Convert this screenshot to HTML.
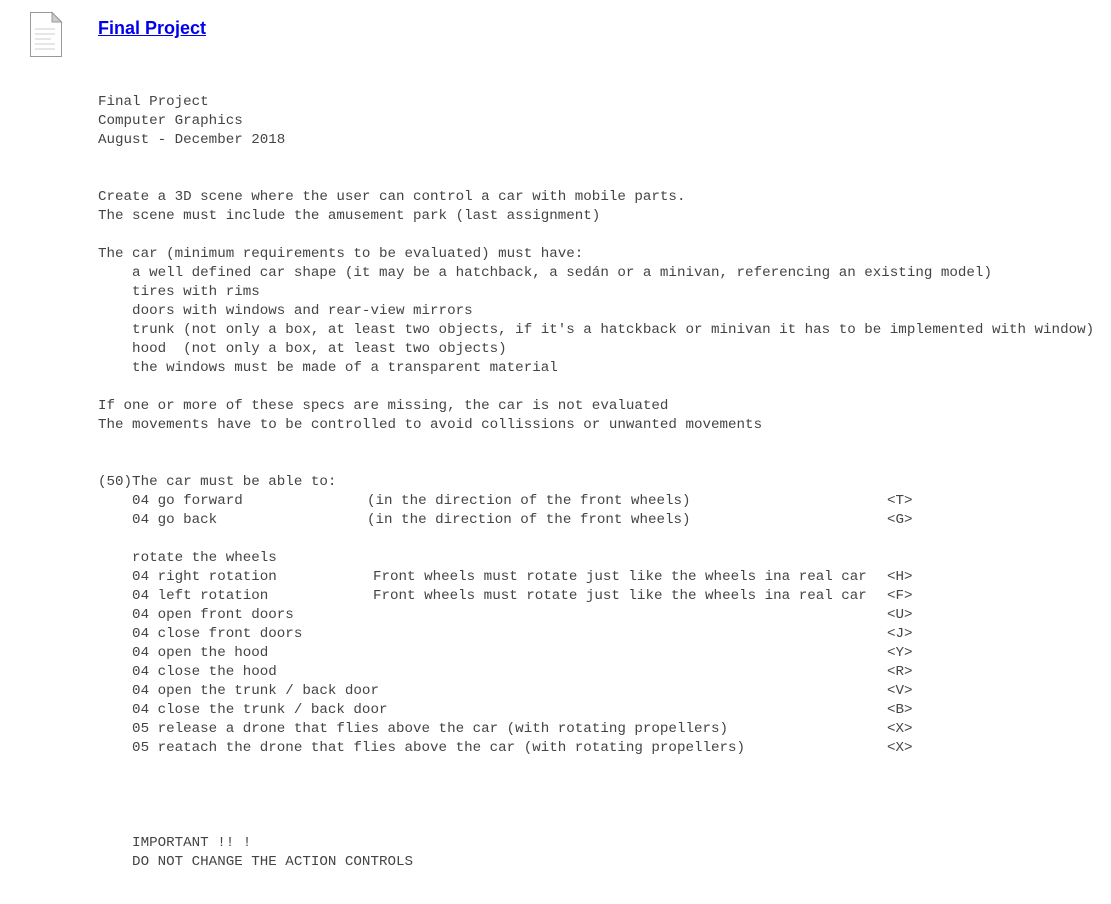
<!DOCTYPE html>
<html><head><meta charset="utf-8"><style>
body{margin:0;background:#fff;width:1111px;height:904px;position:relative;overflow:hidden}
.t{position:absolute;left:98px;top:18px;font:bold 18px "Liberation Sans",sans-serif;color:#0000ee;text-decoration:underline}
.l{position:absolute;font:14.2px "Liberation Mono",monospace;line-height:19px;color:#444;white-space:pre}
</style></head><body>
<svg style="position:absolute;left:29px;top:11px" width="34" height="47" viewBox="0 0 34 47">
<path d="M1.5 1.5H23L32.5 11V45.5H1.5Z" fill="#fff" stroke="#999" stroke-width="1"/>
<path d="M23 1.5V11H32.5Z" fill="#ccc" stroke="#999" stroke-width="1"/>
<g stroke="#ccc" stroke-width="1"><line x1="6" y1="18" x2="26" y2="18"/><line x1="6" y1="23" x2="26" y2="23"/><line x1="6" y1="28" x2="22" y2="28"/><line x1="6" y1="33" x2="26" y2="33"/><line x1="6" y1="38" x2="26" y2="38"/></g>
</svg>
<div class="t">Final Project</div>
<div class="l" style="left:98px;top:93px">Final Project
Computer Graphics
August - December 2018


Create a 3D scene where the user can control a car with mobile parts.
The scene must include the amusement park (last assignment)

The car (minimum requirements to be evaluated) must have:
    a well defined car shape (it may be a hatchback, a sedán or a minivan, referencing an existing model)
    tires with rims
    doors with windows and rear-view mirrors
    trunk (not only a box, at least two objects, if it's a hatckback or minivan it has to be implemented with window)
    hood  (not only a box, at least two objects)
    the windows must be made of a transparent material

If one or more of these specs are missing, the car is not evaluated
The movements have to be controlled to avoid collissions or unwanted movements


(50)The car must be able to:
    04 go forward
    04 go back

    rotate the wheels
    04 right rotation
    04 left rotation
    04 open front doors
    04 close front doors
    04 open the hood
    04 close the hood
    04 open the trunk / back door
    04 close the trunk / back door
    05 release a drone that flies above the car (with rotating propellers)
    05 reatach the drone that flies above the car (with rotating propellers)




    IMPORTANT !! !
    DO NOT CHANGE THE ACTION CONTROLS</div>
<div class="l" style="left:367px;top:492px">(in the direction of the front wheels)
(in the direction of the front wheels)</div>
<div class="l" style="left:373px;top:568px">Front wheels must rotate just like the wheels ina real car
Front wheels must rotate just like the wheels ina real car</div>
<div class="l" style="left:887px;top:492px">&lt;T&gt;
&lt;G&gt;


&lt;H&gt;
&lt;F&gt;
&lt;U&gt;
&lt;J&gt;
&lt;Y&gt;
&lt;R&gt;
&lt;V&gt;
&lt;B&gt;
&lt;X&gt;
&lt;X&gt;</div>
</body></html>
